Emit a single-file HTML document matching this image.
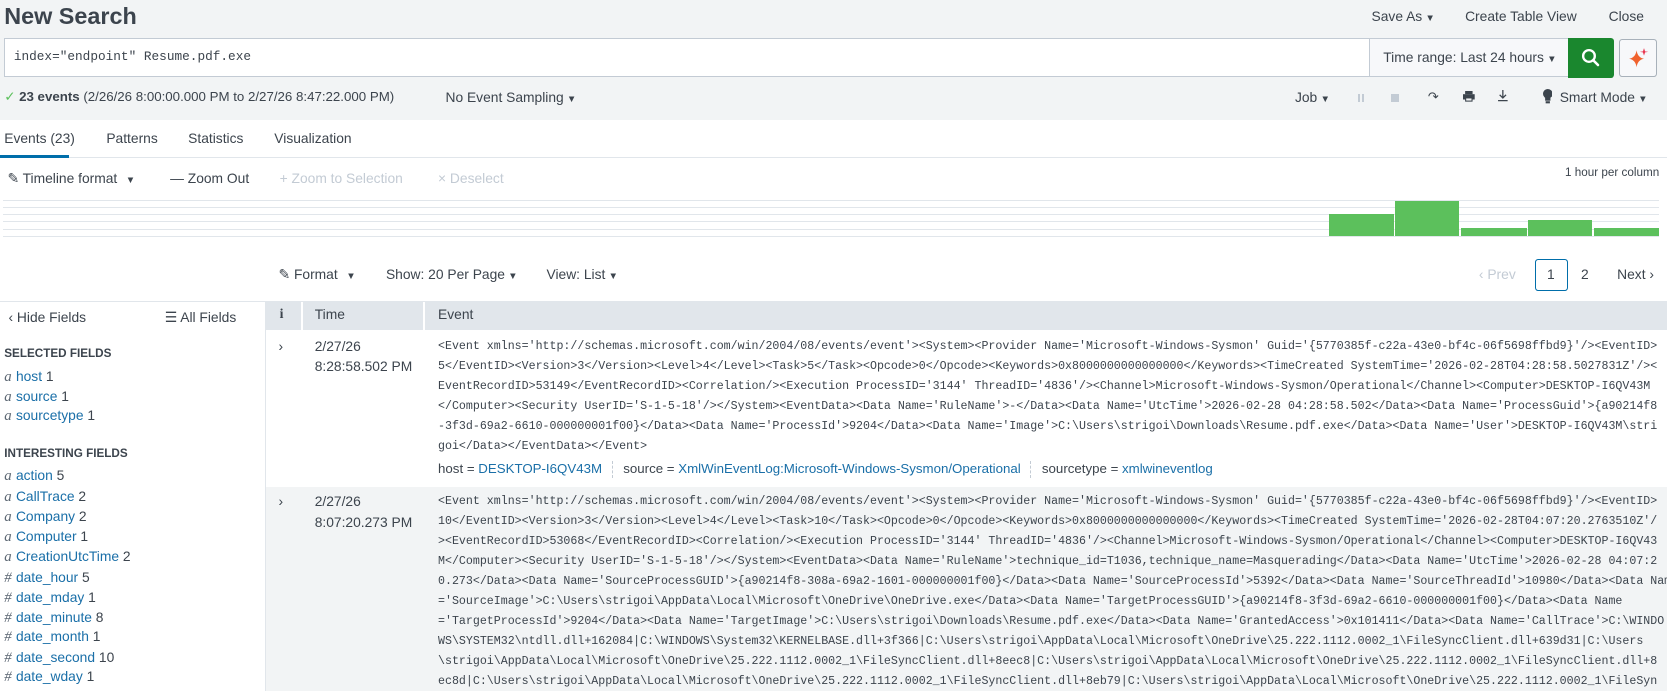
<!DOCTYPE html>
<html><head><meta charset="utf-8">
<style>
html,body{margin:0;padding:0;width:1667px;height:691px;overflow:hidden;background:#fff}
#w{zoom:1.0632;width:1568px;height:650px;position:relative;overflow:hidden;font-family:"Liberation Sans",sans-serif;color:#3c444d;font-size:13px}
.t{position:absolute;white-space:nowrap;line-height:14px}
.a{color:#1a6fa8}
.m{font-family:"Liberation Mono",monospace}
.g{color:#c3cbd4}
.car{font-size:9px;margin-left:3px}
.ev{position:absolute;left:412px;font-family:"Liberation Mono",monospace;font-size:10.93px;line-height:18.8px;white-space:pre;color:#3c444d;margin:0;width:1156px;overflow:hidden}
.f{position:absolute;left:4px;white-space:nowrap;line-height:14px;font-size:13px}
.f i{font-family:"Liberation Serif",serif;color:#5c6773;margin-right:4px;font-size:14px}
.f span{color:#1a6fa8}
.h{position:absolute;left:4px;font-size:11px;font-weight:bold;text-transform:uppercase;line-height:12px}
.hl{position:absolute;left:3px;width:1557px;height:1px;background:#e1e6eb}
.bar{position:absolute;background:#5cc05c}
</style></head><body><div id="w">
<div style="position:absolute;left:0;top:0;width:1568px;height:113px;background:#f2f4f5"></div>
<div class="t" style="left:4px;top:3px;font-size:22px;line-height:26px;font-weight:600">New Search</div>
<div class="t" style="left:1290px;top:8px">Save As<span class="car">▼</span></div>
<div class="t" style="left:1378px;top:8px">Create Table View</div>
<div class="t" style="left:1513px;top:8px">Close</div>
<div style="position:absolute;left:4px;top:36px;width:1283px;height:35px;background:#fff;border:1px solid #c3cbd4;border-right:none"></div>
<div class="t m" style="left:13px;top:47px;font-size:12px">index="endpoint" Resume.pdf.exe</div>
<div style="position:absolute;left:1288px;top:36px;width:186px;height:35px;background:#f7f8fa;border:1px solid #c3cbd4"></div>
<div class="t" style="left:1301px;top:47px">Time range: Last 24 hours<span class="car">▼</span></div>
<div style="position:absolute;left:1475px;top:36px;width:43px;height:37px;background:#1a872e;border-radius:0 3px 3px 0"></div>
<svg style="position:absolute;left:1487px;top:45px" width="18" height="18" viewBox="0 0 18 18"><circle cx="7.5" cy="7.5" r="5.5" fill="none" stroke="#fff" stroke-width="2.2"/><path d="M11.5 11.5L16 16" stroke="#fff" stroke-width="2.4" stroke-linecap="round"/></svg>
<div style="position:absolute;left:1523px;top:37px;width:34px;height:34px;background:#f7f8fa;border:1px solid #a8b1ba;border-radius:3px"></div>
<svg style="position:absolute;left:1530px;top:43px" width="22" height="22" viewBox="0 0 22 22"><path d="M9 4 Q10 11 16 12 Q10 13 9 20 Q8 13 2 12 Q8 11 9 4Z" fill="#f0622d"/><path d="M16 2 L17 5 L20 5.5 L17 6 L16 9 L15 6 L12 5.5 L15 5Z" fill="#e8344f"/></svg>
<div class="t" style="left:4px;top:85px;font-size:12.5px"><span style="color:#5cc05c">✓</span> <b>23 events</b> (2/26/26 8:00:00.000 PM to 2/27/26 8:47:22.000 PM)</div>
<div class="t" style="left:419px;top:85px">No Event Sampling<span class="car">▼</span></div>
<div class="t" style="left:1218px;top:85px">Job<span class="car">▼</span></div>
<div style="position:absolute;left:1277px;top:88px;width:2px;height:8px;background:#c3cbd4"></div><div style="position:absolute;left:1281px;top:88px;width:2px;height:8px;background:#c3cbd4"></div>
<div style="position:absolute;left:1308px;top:88px;width:8px;height:8px;background:#c3cbd4"></div>
<div class="t" style="left:1343px;top:85px;font-size:12px">↷</div>
<svg style="position:absolute;left:1376px;top:86px" width="11" height="10"><rect x="2" y="0" width="7" height="3" fill="#3c444d"/><rect x="0" y="3" width="11" height="5" fill="#3c444d"/><rect x="2" y="6" width="7" height="4" fill="#3c444d"/><rect x="3" y="7" width="5" height="2" fill="#f2f4f5"/></svg>
<svg style="position:absolute;left:1408px;top:85px" width="11" height="11"><path d="M5.5 0V7M2.5 4.5L5.5 7.5L8.5 4.5M1 10H10" stroke="#3c444d" stroke-width="1.2" fill="none"/></svg>
<svg style="position:absolute;left:1451px;top:84px" width="9" height="14"><ellipse cx="4.5" cy="4.5" rx="4.5" ry="4.5" fill="#3c444d"/><rect x="2" y="6" width="5" height="5" fill="#3c444d"/><rect x="2.5" y="11.5" width="4" height="2" fill="#3c444d"/></svg>
<div class="t" style="left:1467px;top:85px">Smart Mode<span class="car">▼</span></div>
<div class="t" style="left:4px;top:123px">Events (23)</div>
<div class="t" style="left:100px;top:123px">Patterns</div>
<div class="t" style="left:177px;top:123px">Statistics</div>
<div class="t" style="left:258px;top:123px">Visualization</div>
<div style="position:absolute;left:0;top:148px;width:1568px;height:1px;background:#e1e6eb"></div>
<div style="position:absolute;left:0;top:146px;width:65px;height:3px;background:#006eaa"></div>
<div class="t" style="left:7px;top:161px">✎ Timeline format<span class="car" style="margin-left:8px">▼</span></div>
<div class="t" style="left:160px;top:161px">— Zoom Out</div>
<div class="t g" style="left:263px;top:161px">+ Zoom to Selection</div>
<div class="t g" style="left:412px;top:161px">× Deselect</div>
<div class="t" style="left:1472px;top:156px;font-size:11px">1 hour per column</div>
<div class="hl" style="top:188px"></div><div class="hl" style="top:195px"></div><div class="hl" style="top:201px"></div><div class="hl" style="top:208px"></div><div class="hl" style="top:215px"></div><div class="hl" style="top:222px"></div>
<div class="bar" style="left:1250px;top:201px;width:61px;height:21px"></div>
<div class="bar" style="left:1312px;top:189px;width:60px;height:33px"></div>
<div class="bar" style="left:1374px;top:214px;width:62px;height:8px"></div>
<div class="bar" style="left:1437px;top:207px;width:60px;height:15px"></div>
<div class="bar" style="left:1499px;top:214px;width:61px;height:8px"></div>
<div class="t" style="left:262px;top:251px">✎ Format<span class="car" style="margin-left:8px">▼</span></div>
<div class="t" style="left:363px;top:251px">Show: 20 Per Page<span class="car">▼</span></div>
<div class="t" style="left:514px;top:251px">View: List<span class="car">▼</span></div>
<div class="t g" style="left:1391px;top:251px">‹ Prev</div>
<div style="position:absolute;left:1444px;top:244px;width:29px;height:28px;border:1px solid #006eaa;border-radius:3px;background:#fff"></div>
<div class="t" style="left:1455px;top:251px">1</div>
<div class="t" style="left:1487px;top:251px">2</div>
<div class="t" style="left:1521px;top:251px">Next ›</div>
<div style="position:absolute;left:0;top:283px;width:1568px;height:1px;background:#e1e6eb"></div>
<div style="position:absolute;left:249px;top:283px;width:1px;height:367px;background:#e1e6eb"></div>
<div class="t" style="left:8px;top:292px">‹ Hide Fields</div>
<div class="t" style="left:155px;top:292px">☰ All Fields</div>
<div class="h" style="top:327px">Selected Fields</div>
<div class="f" style="top:347px"><i>a</i><span>host</span> 1</div>
<div class="f" style="top:366px"><i>a</i><span>source</span> 1</div>
<div class="f" style="top:384px"><i>a</i><span>sourcetype</span> 1</div>
<div class="h" style="top:421px">Interesting Fields</div>
<div class="f" style="top:440px"><i>a</i><span>action</span> 5</div>
<div class="f" style="top:460px"><i>a</i><span>CallTrace</span> 2</div>
<div class="f" style="top:479px"><i>a</i><span>Company</span> 2</div>
<div class="f" style="top:498px"><i>a</i><span>Computer</span> 1</div>
<div class="f" style="top:516px"><i>a</i><span>CreationUtcTime</span> 2</div>
<div class="f" style="top:536px"><i>#</i><span>date_hour</span> 5</div>
<div class="f" style="top:555px"><i>#</i><span>date_mday</span> 1</div>
<div class="f" style="top:574px"><i>#</i><span>date_minute</span> 8</div>
<div class="f" style="top:592px"><i>#</i><span>date_month</span> 1</div>
<div class="f" style="top:611px"><i>#</i><span>date_second</span> 10</div>
<div class="f" style="top:629px"><i>#</i><span>date_wday</span> 1</div>
<div style="position:absolute;left:250px;top:284px;width:1318px;height:26px;background:#e1e6eb"></div>
<div style="position:absolute;left:283px;top:284px;width:2px;height:26px;background:#fff"></div>
<div style="position:absolute;left:398px;top:284px;width:2px;height:26px;background:#fff"></div>
<div class="t" style="left:263px;top:289px;font-family:'Liberation Serif',serif;font-weight:bold">i</div>
<div class="t" style="left:296px;top:289px">Time</div>
<div class="t" style="left:412px;top:289px">Event</div>
<div style="position:absolute;left:250px;top:458px;width:1318px;height:192px;background:#f2f4f5"></div>
<div class="t" style="left:262px;top:319px">›</div>
<div class="t" style="left:296px;top:319px">2/27/26</div>
<div class="t" style="left:296px;top:338px">8:28:58.502 PM</div>
<pre class="ev" style="top:317px">&lt;Event xmlns='http://schemas.microsoft.com/win/2004/08/events/event'&gt;&lt;System&gt;&lt;Provider Name='Microsoft-Windows-Sysmon' Guid='{5770385f-c22a-43e0-bf4c-06f5698ffbd9}'/&gt;&lt;EventID&gt;
5&lt;/EventID&gt;&lt;Version&gt;3&lt;/Version&gt;&lt;Level&gt;4&lt;/Level&gt;&lt;Task&gt;5&lt;/Task&gt;&lt;Opcode&gt;0&lt;/Opcode&gt;&lt;Keywords&gt;0x8000000000000000&lt;/Keywords&gt;&lt;TimeCreated SystemTime='2026-02-28T04:28:58.5027831Z'/&gt;&lt;
EventRecordID&gt;53149&lt;/EventRecordID&gt;&lt;Correlation/&gt;&lt;Execution ProcessID='3144' ThreadID='4836'/&gt;&lt;Channel&gt;Microsoft-Windows-Sysmon/Operational&lt;/Channel&gt;&lt;Computer&gt;DESKTOP-I6QV43M
&lt;/Computer&gt;&lt;Security UserID='S-1-5-18'/&gt;&lt;/System&gt;&lt;EventData&gt;&lt;Data Name='RuleName'&gt;-&lt;/Data&gt;&lt;Data Name='UtcTime'&gt;2026-02-28 04:28:58.502&lt;/Data&gt;&lt;Data Name='ProcessGuid'&gt;{a90214f8
-3f3d-69a2-6610-000000001f00}&lt;/Data&gt;&lt;Data Name='ProcessId'&gt;9204&lt;/Data&gt;&lt;Data Name='Image'&gt;C:\Users\strigoi\Downloads\Resume.pdf.exe&lt;/Data&gt;&lt;Data Name='User'&gt;DESKTOP-I6QV43M\stri
goi&lt;/Data&gt;&lt;/EventData&gt;&lt;/Event&gt;</pre>
<div class="t" style="left:412px;top:434px;font-size:12.5px">host = <span class="a">DESKTOP-I6QV43M</span><span style="display:inline-block;width:1px;height:16px;border-left:1px dashed #c3cbd4;margin:0 9px;vertical-align:middle"></span>source = <span class="a">XmlWinEventLog:Microsoft-Windows-Sysmon/Operational</span><span style="display:inline-block;width:1px;height:16px;border-left:1px dashed #c3cbd4;margin:0 9px;vertical-align:middle"></span>sourcetype = <span class="a">xmlwineventlog</span></div>
<div class="t" style="left:262px;top:465px">›</div>
<div class="t" style="left:296px;top:465px">2/27/26</div>
<div class="t" style="left:296px;top:484px">8:07:20.273 PM</div>
<pre class="ev" style="top:463px">&lt;Event xmlns='http://schemas.microsoft.com/win/2004/08/events/event'&gt;&lt;System&gt;&lt;Provider Name='Microsoft-Windows-Sysmon' Guid='{5770385f-c22a-43e0-bf4c-06f5698ffbd9}'/&gt;&lt;EventID&gt;
10&lt;/EventID&gt;&lt;Version&gt;3&lt;/Version&gt;&lt;Level&gt;4&lt;/Level&gt;&lt;Task&gt;10&lt;/Task&gt;&lt;Opcode&gt;0&lt;/Opcode&gt;&lt;Keywords&gt;0x8000000000000000&lt;/Keywords&gt;&lt;TimeCreated SystemTime='2026-02-28T04:07:20.2763510Z'/
&gt;&lt;EventRecordID&gt;53068&lt;/EventRecordID&gt;&lt;Correlation/&gt;&lt;Execution ProcessID='3144' ThreadID='4836'/&gt;&lt;Channel&gt;Microsoft-Windows-Sysmon/Operational&lt;/Channel&gt;&lt;Computer&gt;DESKTOP-I6QV43
M&lt;/Computer&gt;&lt;Security UserID='S-1-5-18'/&gt;&lt;/System&gt;&lt;EventData&gt;&lt;Data Name='RuleName'&gt;technique_id=T1036,technique_name=Masquerading&lt;/Data&gt;&lt;Data Name='UtcTime'&gt;2026-02-28 04:07:2
0.273&lt;/Data&gt;&lt;Data Name='SourceProcessGUID'&gt;{a90214f8-308a-69a2-1601-000000001f00}&lt;/Data&gt;&lt;Data Name='SourceProcessId'&gt;5392&lt;/Data&gt;&lt;Data Name='SourceThreadId'&gt;10980&lt;/Data&gt;&lt;Data Name
='SourceImage'&gt;C:\Users\strigoi\AppData\Local\Microsoft\OneDrive\OneDrive.exe&lt;/Data&gt;&lt;Data Name='TargetProcessGUID'&gt;{a90214f8-3f3d-69a2-6610-000000001f00}&lt;/Data&gt;&lt;Data Name
='TargetProcessId'&gt;9204&lt;/Data&gt;&lt;Data Name='TargetImage'&gt;C:\Users\strigoi\Downloads\Resume.pdf.exe&lt;/Data&gt;&lt;Data Name='GrantedAccess'&gt;0x101411&lt;/Data&gt;&lt;Data Name='CallTrace'&gt;C:\WINDO
WS\SYSTEM32\ntdll.dll+162084|C:\WINDOWS\System32\KERNELBASE.dll+3f366|C:\Users\strigoi\AppData\Local\Microsoft\OneDrive\25.222.1112.0002_1\FileSyncClient.dll+639d31|C:\Users
\strigoi\AppData\Local\Microsoft\OneDrive\25.222.1112.0002_1\FileSyncClient.dll+8eec8|C:\Users\strigoi\AppData\Local\Microsoft\OneDrive\25.222.1112.0002_1\FileSyncClient.dll+8
ec8d|C:\Users\strigoi\AppData\Local\Microsoft\OneDrive\25.222.1112.0002_1\FileSyncClient.dll+8eb79|C:\Users\strigoi\AppData\Local\Microsoft\OneDrive\25.222.1112.0002_1\FileSyn</pre>
</div></body></html>
